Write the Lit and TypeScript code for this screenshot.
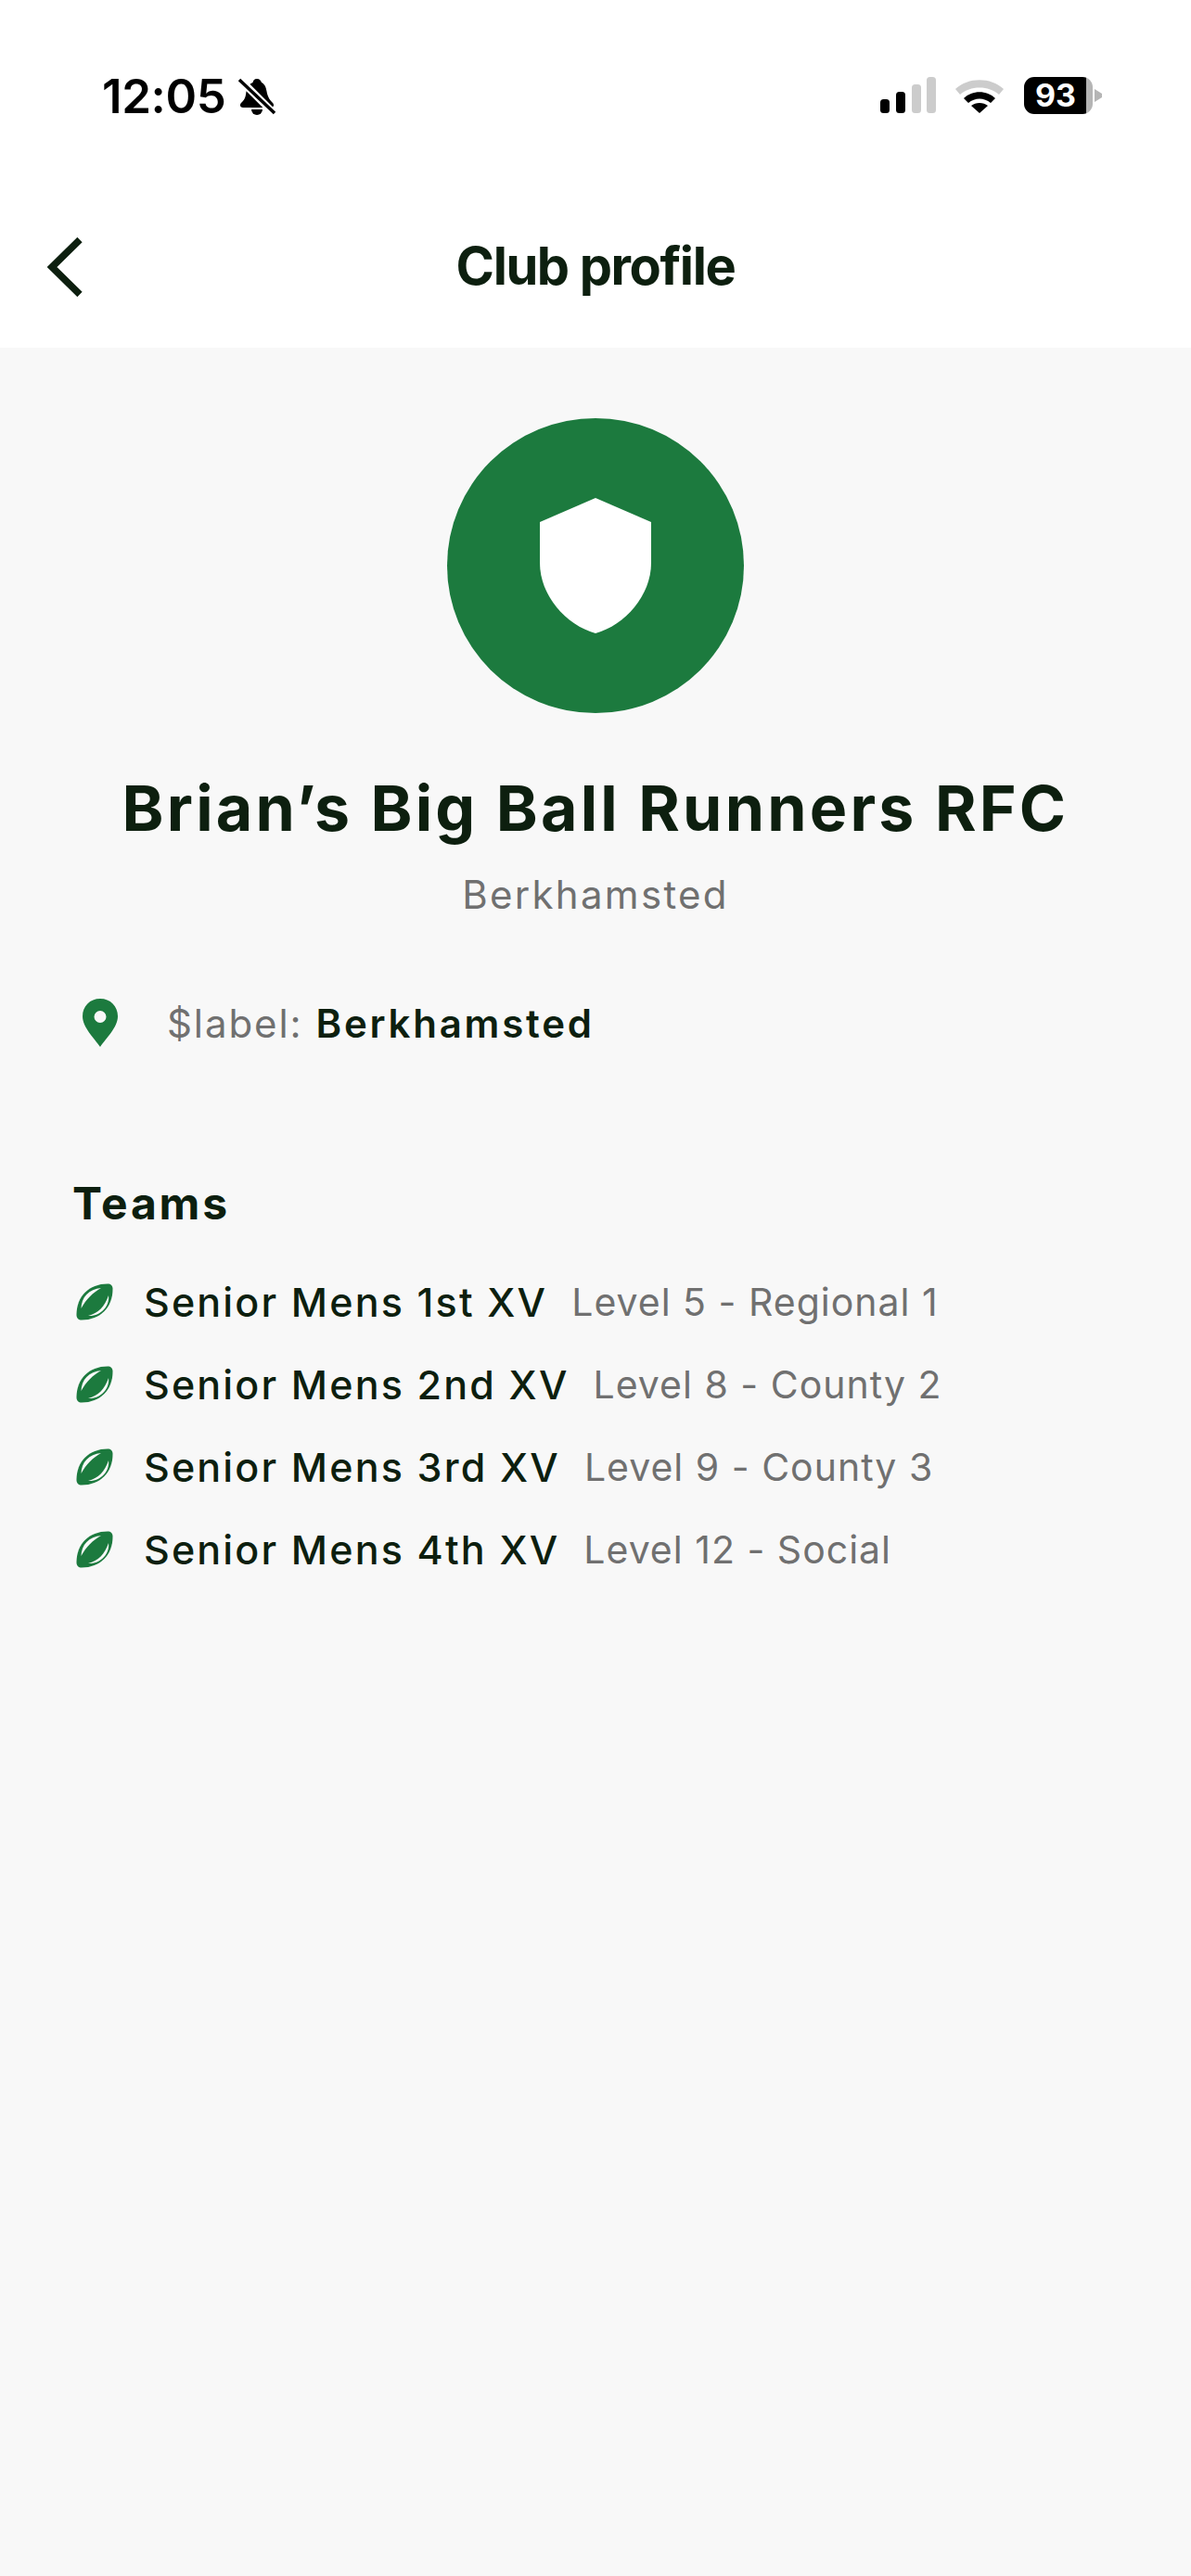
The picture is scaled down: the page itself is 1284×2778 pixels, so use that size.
import { LitElement, html, css } from "lit";
import { customElement } from "lit/decorators.js";

const ball = html`<svg class="ball" viewBox="0 0 40 40" width="40" height="40">
  <path d="M6 39.500C2.500 39.500.5 37.500.5 34C.5 14 14 .5 34 .5C37.500 .5 39.500 2.500 39.500 6C39.500 26 26 39.500 6 39.500Z" fill="#1c7a3e"/>
  <path d="M5.500 27C5.500 15 14 6 27 5C18 10 11 17 5.500 27Z" fill="#f8f8f8"/>
  <path d="M13 35C24 32 31 25 35 13C36.500 25 26 36 13 35Z" fill="#f8f8f8"/>
</svg>`;

const teams = [
  ["Senior Mens 1st XV", "Level 5 - Regional 1"],
  ["Senior Mens 2nd XV", "Level 8 - County 2"],
  ["Senior Mens 3rd XV", "Level 9 - County 3"],
  ["Senior Mens 4th XV", "Level 12 - Social"],
];

@customElement("app-root")
export class AppRoot extends LitElement {
  static styles = css`
    :host { display: block; width: 1284px; height: 2778px; background: #f8f8f8; font-family: Inter, "Liberation Sans", sans-serif; color: #0d1f0f; overflow: hidden; }
    .top { background: #fff; height: 375px; display: flex; flex-direction: column; }
    .status { height: 128px; display: flex; align-items: flex-start; justify-content: space-between; padding: 83px 95px 0 110px; box-sizing: border-box; color: #000; }
    .left { display: flex; align-items: center; gap: 13px; }
    .time { font-size: 51px; font-weight: 600; line-height: 40px; letter-spacing: -0.4px; }
    .right { display: flex; align-items: center; }
    .signal { margin-right: 18px; display: block; }
    .wifi { margin-right: 21px; display: block; }
    .battery { display: flex; align-items: center; }
    .batt-body { width: 74px; height: 40px; border-radius: 11px; background: linear-gradient(90deg, #000 0 90%, #b5b5b5 90% 100%); color: #fff; font-size: 34px; font-weight: 700; line-height: 40px; text-align: center; box-sizing: border-box; padding-right: 6px; }
    .nav { flex: 1; position: relative; display: flex; align-items: center; justify-content: center; padding-top: 71px; box-sizing: border-box; }
    .nav h1 { margin: 0; font-size: 56px; font-weight: 650; letter-spacing: -1.400px; line-height: 60px; color: #0d1f0f; }
    .back { position: absolute; left: 50px; top: 128px; display: block; }
    .main { display: flex; flex-direction: column; align-items: stretch; }
    .hero { display: flex; flex-direction: column; align-items: center; padding-top: 76px; }
    .avatar { width: 320px; height: 318px; border-radius: 50%; background: #1c7a3e; display: flex; align-items: center; justify-content: center; }
    .avatar svg { display: block; }
    .name { margin: 57px 0 0; font-size: 68px; font-weight: 700; line-height: 90px; letter-spacing: 3.200px; }
    .sub { margin-top: 24px; font-size: 42px; line-height: 50px; color: #707070; letter-spacing: 2.300px; }
    .loc { display: flex; align-items: center; margin: 83px 0 0 89px; height: 60px; }
    .loc svg { display: block; margin-right: 53px; }
    .loc .lab { font-size: 42px; color: #707070; letter-spacing: 1.900px; margin-right: 14px; }
    .loc .val { font-size: 42px; font-weight: 600; letter-spacing: 2.750px; }
    .teams { margin: 135px 0 0 78px; }
    .teams h2 { margin: 0 0 31px; font-size: 48px; font-weight: 650; line-height: 60px; letter-spacing: 2.800px; }
    .row { display: flex; align-items: center; height: 89px; }
    .ball { display: block; margin: 0 33px 0 4px; flex: none; }
    .row b { font-size: 43px; font-weight: 550; letter-spacing: 2.150px; }
    .row span { font-size: 41px; color: #707070; letter-spacing: 1px; margin-left: 26px; }
  `;

  render() {
    return html`
      <div class="top">
        <div class="status">
          <div class="left">
            <span class="time">12:05</span>
            <svg width="42" height="42" viewBox="0 0 42 42">
              <path d="M21 2c-3 0-4 2-4.500 4C11 8 10 13 9 19c-.8 5-3 7-5 9-2 2-1 5 2 5h30c3 0 4-3 2-5-3-3-5-6-6-10-1-6-2-10-6-12-.8-2-2-4-5-4Z" fill="#000"/>
              <path d="M15 35a6 6 0 0 0 12 0Z" fill="#000"/>
              <path d="M1 1L41 41" stroke="#fff" stroke-width="8"/>
              <path d="M2 3L40 39" stroke="#000" stroke-width="3.500"/>
            </svg>
          </div>
          <div class="right">
            <svg class="signal" width="62" height="40" viewBox="0 0 62 40">
              <rect x="0" y="24" width="10" height="15" rx="3.500" fill="#000"/>
              <rect x="17" y="16" width="10" height="23" rx="3.500" fill="#000"/>
              <rect x="34" y="8" width="10" height="31" rx="3.500" fill="#ccc"/>
              <rect x="50" y="0" width="10" height="39" rx="3.500" fill="#ccc"/>
            </svg>
            <svg class="wifi" width="54" height="38" viewBox="0 0 54 38">
              <path d="M1 12C15 -1 39 -1 53 12L48 18C37 8 17 8 6 18Z" fill="#ccc"/>
              <path d="M10 22C19 13 35 13 44 22L39 27C32 21 22 21 15 27Z" fill="#000"/>
              <path d="M18 30C23 26 31 26 36 30L27 38Z" fill="#000"/>
            </svg>
            <div class="battery">
              <div class="batt-body">93</div>
              <svg width="11" height="16" viewBox="0 0 11 16"><path d="M2 1L10 6V10L2 15Z" fill="#b5b5b5"/></svg>
            </div>
          </div>
        </div>
        <div class="nav">
          <svg class="back" width="40" height="64" viewBox="0 0 40 64">
            <path d="M36 2.500L6 32L36 61.500" fill="none" stroke="#0d1f0f" stroke-width="7.500"/>
          </svg>
          <h1>Club profile</h1>
        </div>
      </div>
      <div class="main">
        <div class="hero">
          <div class="avatar">
            <svg width="120" height="146" viewBox="0 0 120 146">
              <path d="M60 0L120 26V70C120 105 92 137 60 146C28 137 0 105 0 70V26Z" fill="#fff"/>
            </svg>
          </div>
          <h2 class="name">Brian’s Big Ball Runners RFC</h2>
          <div class="sub">Berkhamsted</div>
        </div>
        <div class="loc">
          <svg width="38" height="52" viewBox="0 0 38 52">
            <path fill-rule="evenodd" d="M19 0C8 0 0 8 0 19C0 31 13 43 19 52C25 43 38 31 38 19C38 8 30 0 19 0ZM19 13A6.500 6.500 0 1 1 19 26A6.500 6.500 0 1 1 19 13Z" fill="#1c7a3e"/>
          </svg>
          <span class="lab">$label:</span><span class="val">Berkhamsted</span>
        </div>
        <div class="teams">
          <h2>Teams</h2>
          ${teams.map(([a, b]) => html`<div class="row">${ball}<b>${a}</b><span>${b}</span></div>`)}
        </div>
      </div>
    `;
  }
}
